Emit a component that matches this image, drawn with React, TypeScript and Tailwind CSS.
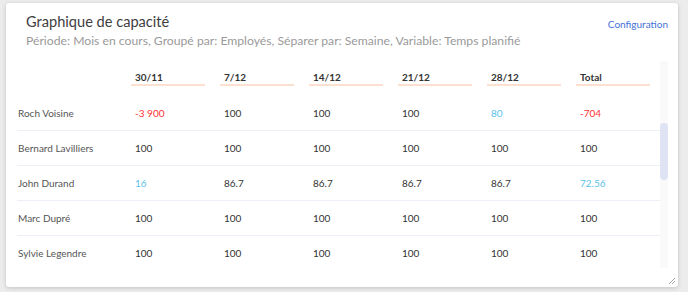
const weeks = ['30/11', '7/12', '14/12', '21/12', '28/12', 'Total']

type Cell = { v: string; tone?: 'red' | 'blue' }

const rows: { name: string; cells: Cell[] }[] = [
  {
    name: 'Roch Voisine',
    cells: [{ v: '-3 900', tone: 'red' }, { v: '100' }, { v: '100' }, { v: '100' }, { v: '80', tone: 'blue' }, { v: '-704', tone: 'red' }],
  },
  {
    name: 'Bernard Lavilliers',
    cells: [{ v: '100' }, { v: '100' }, { v: '100' }, { v: '100' }, { v: '100' }, { v: '100' }],
  },
  {
    name: 'John Durand',
    cells: [{ v: '16', tone: 'blue' }, { v: '86.7' }, { v: '86.7' }, { v: '86.7' }, { v: '86.7' }, { v: '72.56', tone: 'blue' }],
  },
  {
    name: 'Marc Dupré',
    cells: [{ v: '100' }, { v: '100' }, { v: '100' }, { v: '100' }, { v: '100' }, { v: '100' }],
  },
  {
    name: 'Sylvie Legendre',
    cells: [{ v: '100' }, { v: '100' }, { v: '100' }, { v: '100' }, { v: '100' }, { v: '100' }],
  },
]

const cols = 'grid grid-cols-[114px_89px_89px_89px_89px_89px_84px]'

function toneClass(tone?: Cell['tone']) {
  if (tone === 'red') return 'text-[#ff3434]'
  if (tone === 'blue') return 'text-[#5bc2ec]'
  return 'text-[#333]'
}

export default function App() {
  return (
    <div className="h-[292px] w-[688px] bg-[#ececec] pl-[6px] pt-[3px] font-['Lato',sans-serif]">
      <div className="relative flex h-[284px] w-[672px] flex-col rounded-[3px] bg-white shadow-[0_1px_4px_rgba(0,0,0,0.18)]">
        <div className="flex items-start justify-between pl-[20px] pr-[10px] pt-[9px]">
          <div>
            <h2 className="text-[14.6px] leading-[20px] text-[#3d3d3d]">Graphique de capacité</h2>
            <p className="mt-[1px] text-[12.2px] leading-[16px] text-[#9a9a9a]">
              Période: Mois en cours, Groupé par: Employés, Séparer par: Semaine, Variable: Temps planifié
            </p>
          </div>
          <a className="mt-[5px] text-[10px] leading-[14px] text-[#3f72d6]">Configuration</a>
        </div>

        <div className="ml-[11px] mt-[12px] flex h-[207px] w-[651px]">
          <div className="w-[643px] overflow-hidden">
            <div className={`${cols} h-[35px] pt-[9px] text-[10px] font-bold leading-[14px] text-[#333]`}>
              <div />
              {weeks.map((w, i) => (
                <div key={w} className={i === 5 ? 'pr-[10px]' : 'pr-[15px]'}>
                  <div className="h-[16px] border-b-2 border-[#fde0cf] pl-[4px]">{w}</div>
                </div>
              ))}
            </div>
            {rows.map((r, idx) => (
              <div
                key={r.name}
                className={`${cols} h-[35px] items-center text-[10px] ${idx < rows.length - 1 ? 'border-b-[1.5px] border-[#eceff6]' : ''}`}
              >
                <div className="pl-[1px] text-[#555]">{r.name}</div>
                {r.cells.map((c, i) => (
                  <div key={i} className={`pl-[4px] ${toneClass(c.tone)}`}>
                    {c.v}
                  </div>
                ))}
              </div>
            ))}
          </div>
          <div className="relative w-[8px] bg-[#fafafa]">
            <div className="absolute left-0 top-[62px] h-[57px] w-[8px] rounded-[4px] bg-[#dfe3f3]" />
          </div>
        </div>

        <svg className="absolute bottom-[3px] right-[3px]" width="6" height="6" viewBox="0 0 6 6">
          <path d="M6 0 L0 6 M6 3 L3 6" stroke="#aaa" strokeWidth="1" />
        </svg>
      </div>
    </div>
  )
}
